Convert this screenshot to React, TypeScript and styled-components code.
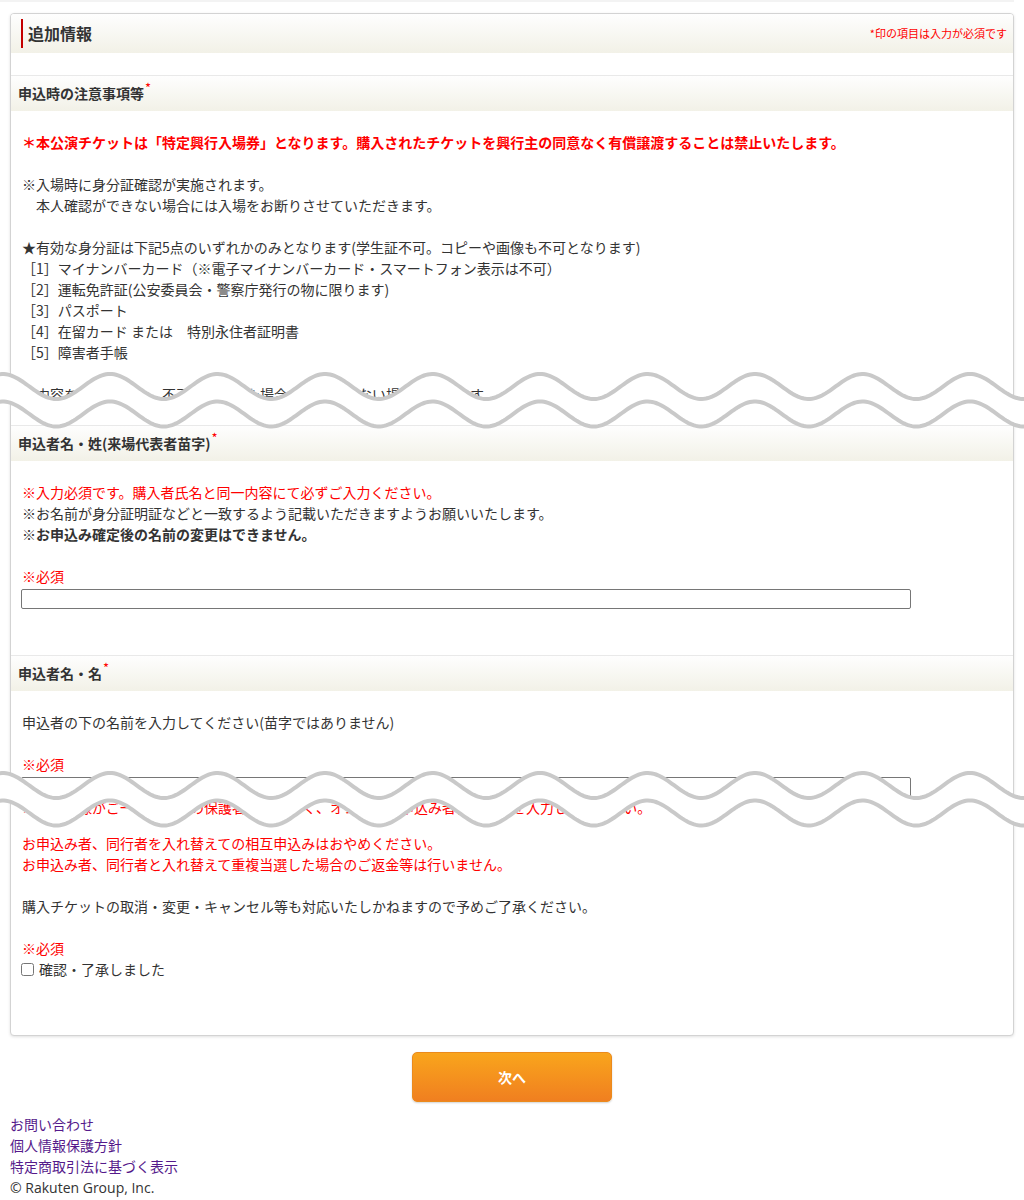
import React from "react";
import styled, { createGlobalStyle } from "styled-components";

const GlobalStyle = createGlobalStyle`
  html, body { margin: 0; padding: 0; background: #fff; }
  body {
    font-family: "Noto Sans CJK JP", "Noto Sans", sans-serif;
    font-size: 14px;
    line-height: 21px;
    color: #333;
  }
`;

const Page = styled.div`
  position: relative;
  width: 1024px;
  box-sizing: border-box;
  padding: 0 10px 12px;
`;

const TopRule = styled.div`
  height: 2px;
  margin: 0 0 11px -10px;
  width: 1014px;
  background: #f3f3f3;
`;

const Card = styled.section`
  background: #fff;
  border: 1px solid #d3d3d3;
  border-radius: 4px;
  box-shadow: 0 1px 3px rgba(0, 0, 0, 0.12);
  overflow: hidden;
`;

const CardHeader = styled.header`
  display: flex;
  align-items: center;
  justify-content: space-between;
  height: 39px;
  padding: 0 6px 0 10px;
  background: linear-gradient(to bottom, #fefefe, #f2f1e7);
`;

const CardTitle = styled.h2`
  margin: 0;
  padding-left: 5px;
  border-left: 2px solid #c40000;
  font-size: 16px;
  font-weight: bold;
  line-height: 29px;
  color: #333;
`;

const RequiredNote = styled.span`
  font-size: 11px;
  color: #f00;
`;

const HeaderSpacer = styled.div`
  height: 22px;
`;

const Section = styled.div`
  border-top: 1px solid #e9e9e9;
`;

const SectionHeader = styled.h3`
  margin: 0;
  height: 35px;
  padding: 0 7px;
  background: linear-gradient(to bottom, #fefefe, #f2f1e7);
  font-size: 14px;
  font-weight: bold;
  line-height: 35px;
  color: #333;
`;

const Req = styled.span`
  color: #f00;
  font-size: 13px;
  font-weight: normal;
  vertical-align: super;
  line-height: 0;
  margin-left: 1px;
`;

const SectionBody = styled.div<{ $bottom: number }>`
  padding: 21px 11px ${(p) => p.$bottom}px;
`;

type Tone = "normal" | "red" | "bold" | "redBold";

const Para = styled.p<{ $tone?: Tone; $gap?: number }>`
  margin: 0 0 ${(p) => (p.$gap ?? 21)}px;
  color: ${(p) => (p.$tone === "red" || p.$tone === "redBold" ? "#f00" : "#333")};
  font-weight: ${(p) => (p.$tone === "bold" || p.$tone === "redBold" ? "bold" : "normal")};
`;

const MustLabel = styled.div`
  color: #f00;
`;

const TextInput = styled.input`
  display: block;
  box-sizing: border-box;
  width: 890px;
  height: 20px;
  margin: 2px 0 0 -1px;
  padding: 0 4px;
  border: 1px solid #767676;
  border-radius: 2px;
  background: #fff;
  font: inherit;
`;

const CheckRow = styled.label`
  display: flex;
  align-items: center;
  color: #333;
`;

const CheckBox = styled.input`
  width: 13px;
  height: 13px;
  margin: 0 5px 0 -1px;
`;

const Actions = styled.div`
  display: flex;
  justify-content: center;
  margin-top: 16px;
`;

const NextButton = styled.button`
  width: 200px;
  height: 50px;
  border: 1px solid #eb8a1c;
  border-radius: 5px;
  background: linear-gradient(to bottom, #f9a51c, #f07f20);
  box-shadow: 0 1px 2px rgba(0, 0, 0, 0.18);
  color: #fff;
  font-family: "Noto Sans CJK JP", sans-serif;
  font-size: 14px;
  font-weight: bold;
  cursor: pointer;
`;

const Footer = styled.footer`
  display: flex;
  flex-direction: column;
  margin-top: 12px;
`;

const FooterLink = styled.a`
  color: #551a8b;
  text-decoration: none;
`;

const Copyright = styled.span`
  color: #333;
  font-family: "Open Sans", "Noto Sans CJK JP", sans-serif;
`;

const WaveLayer = styled.svg<{ $top: number }>`
  position: absolute;
  left: 0;
  top: ${(p) => p.$top}px;
  width: 1024px;
  height: 80px;
  pointer-events: none;
  overflow: visible;
`;

const PERIOD = 107.5;
const PHASE = 2.5;
const AMP = 12.5;

function wavePoints(mid: number, from: number, to: number, step: number): string {
  const pts: string[] = [];
  const dir = to >= from ? 1 : -1;
  for (let x = from; dir > 0 ? x <= to : x >= to; x += step * dir) {
    const y = mid - AMP * Math.cos((2 * Math.PI * (x - PHASE)) / PERIOD);
    pts.push(`${x.toFixed(1)} ${y.toFixed(2)}`);
  }
  return pts.join(" L ");
}

const TornEdge: React.FC<{ top: number }> = ({ top }) => {
  const upper = wavePoints(26.5, -6, 1030, 2);
  const lowerBack = wavePoints(54, 1030, -6, 2);
  const lower = wavePoints(54, -6, 1030, 2);
  return (
    <WaveLayer $top={top} viewBox="0 0 1024 80">
      <path d={`M ${upper} L ${lowerBack} Z`} fill="#fff" />
      <path d={`M ${upper}`} fill="none" stroke="#c9c9c9" strokeWidth={4} strokeLinecap="round" />
      <path d={`M ${lower}`} fill="none" stroke="#c9c9c9" strokeWidth={4} strokeLinecap="round" />
    </WaveLayer>
  );
};

const IDEO_SPACE = "\u3000";

export default function App() {
  return (
    <>
      <GlobalStyle />
      <Page>
        <TopRule />
        <Card>
          <CardHeader>
            <CardTitle>追加情報</CardTitle>
            <RequiredNote>*印の項目は入力が必須です</RequiredNote>
          </CardHeader>
          <HeaderSpacer />

          <Section>
            <SectionHeader>
              申込時の注意事項等<Req>*</Req>
            </SectionHeader>
            <SectionBody $bottom={20}>
              <Para $tone="redBold">
                ＊本公演チケットは「特定興行入場券」となります。購入されたチケットを興行主の同意なく有償譲渡することは禁止いたします。
              </Para>
              <Para>
                ※入場時に身分証確認が実施されます。
                <br />
                {IDEO_SPACE + "本人確認ができない場合には入場をお断りさせていただきます。"}
              </Para>
              <Para>
                ★有効な身分証は下記5点のいずれかのみとなります(学生証不可。コピーや画像も不可となります)
                <br />
                ［1］マイナンバーカード（※電子マイナンバーカード・スマートフォン表示は不可）
                <br />
                ［2］運転免許証(公安委員会・警察庁発行の物に限ります)
                <br />
                ［3］パスポート
                <br />
                {"［4］在留カード または" + IDEO_SPACE + "特別永住者証明書"}
                <br />
                ［5］障害者手帳
              </Para>
              <Para $gap={0}>
                ※内容をご確認の上、不正が判明した場合ご入場頂けない場合があります。
              </Para>
            </SectionBody>
          </Section>

          <Section>
            <SectionHeader>
              申込者名・姓(来場代表者苗字)<Req>*</Req>
            </SectionHeader>
            <SectionBody $bottom={46}>
              <Para $tone="red" $gap={0}>
                ※入力必須です。購入者氏名と同一内容にて必ずご入力ください。
              </Para>
              <Para $gap={0}>
                ※お名前が身分証明証などと一致するよう記載いただきますようお願いいたします。
              </Para>
              <Para $tone="bold">※お申込み確定後の名前の変更はできません。</Para>
              <MustLabel>※必須</MustLabel>
              <TextInput type="text" />
            </SectionBody>
          </Section>

          <Section>
            <SectionHeader>
              申込者名・名<Req>*</Req>
            </SectionHeader>
            <SectionBody $bottom={55}>
              <Para>申込者の下の名前を入力してください(苗字ではありません)</Para>
              <MustLabel>※必須</MustLabel>
              <TextInput type="text" />
              <Para $tone="red" $gap={15}>
                ※同行者様がご一緒の場合の保護者様ではなく、オンライン申込み者様の名前を入力してください。
              </Para>
              <Para $tone="red">
                お申込み者、同行者を入れ替えての相互申込みはおやめください。
                <br />
                お申込み者、同行者と入れ替えて重複当選した場合のご返金等は行いません。
              </Para>
              <Para>購入チケットの取消・変更・キャンセル等も対応いたしかねますので予めご了承ください。</Para>
              <MustLabel>※必須</MustLabel>
              <CheckRow>
                <CheckBox type="checkbox" />
                確認・了承しました
              </CheckRow>
            </SectionBody>
          </Section>
        </Card>

        <Actions>
          <NextButton type="button">次へ</NextButton>
        </Actions>

        <Footer>
          <FooterLink href="#">お問い合わせ</FooterLink>
          <FooterLink href="#">個人情報保護方針</FooterLink>
          <FooterLink href="#">特定商取引法に基づく表示</FooterLink>
          <Copyright>© Rakuten Group, Inc.</Copyright>
        </Footer>

        <TornEdge top={360} />
        <TornEdge top={759} />
      </Page>
    </>
  );
}
